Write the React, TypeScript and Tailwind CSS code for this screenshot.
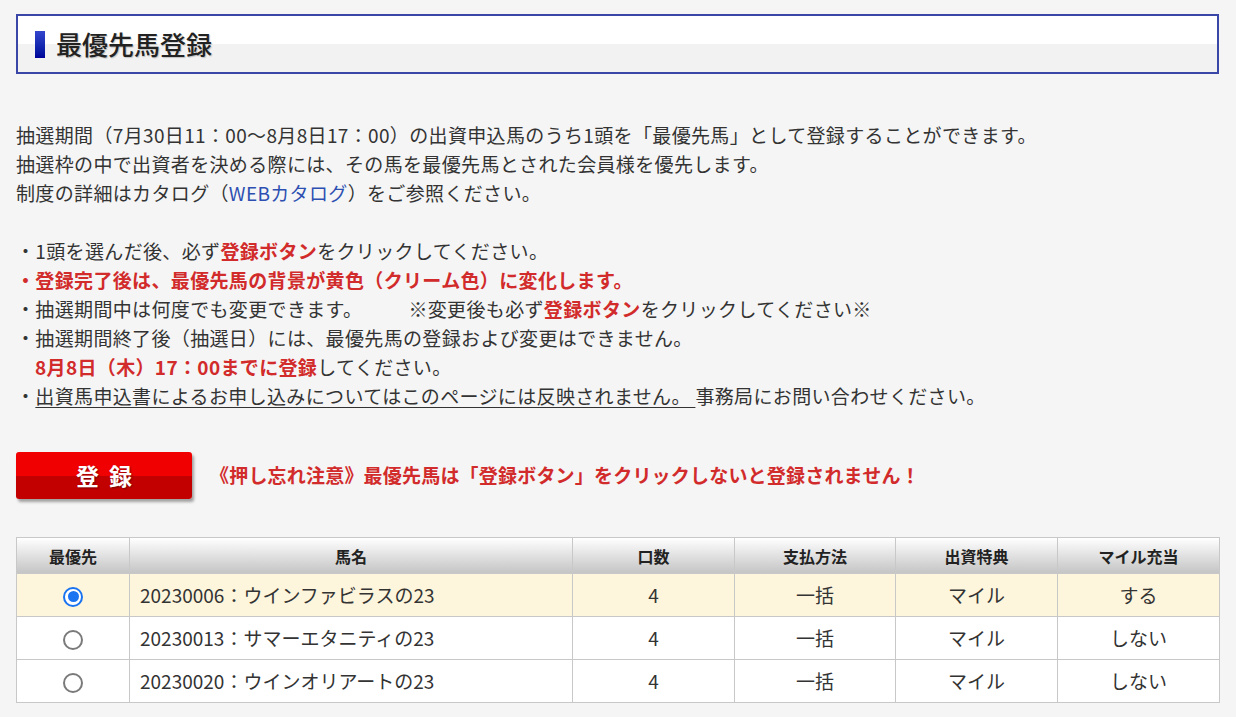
import { useState } from 'react';

// 最優先馬の登録画面
interface Horse {
  id: string;
  name: string;
  units: number;
  payment: string;
  benefit: string;
  mileUse: string;
}

const HORSES: Horse[] = [
  { id: '20230006', name: 'ウインファビラスの23', units: 4, payment: '一括', benefit: 'マイル', mileUse: 'する' },
  { id: '20230013', name: 'サマーエタニティの23', units: 4, payment: '一括', benefit: 'マイル', mileUse: 'しない' },
  { id: '20230020', name: 'ウインオリアートの23', units: 4, payment: '一括', benefit: 'マイル', mileUse: 'しない' },
];

function Radio({ checked, onClick }: { checked: boolean; onClick: () => void }) {
  return (
    <button
      type="button"
      onClick={onClick}
      className={
        checked
          ? 'w-5 h-5 rounded-full border-2 border-[#1a73f0] flex items-center justify-center bg-white'
          : 'w-5 h-5 rounded-full border-2 border-[#7a7a7a] bg-white'
      }
    >
      {checked && <span className="w-[11px] h-[11px] rounded-full bg-[#1a73f0]" />}
    </button>
  );
}

export default function App() {
  const [selected, setSelected] = useState('20230006');
  const [registered] = useState('20230006');

  const red = 'text-[#d22b2b] font-bold';

  return (
    <div className="min-h-[717px] bg-[#f5f5f5] pt-[14px] pl-4 pr-[17px] pb-4 text-[#333] font-['Noto_Sans_CJK_JP','Noto_Sans',sans-serif]">
      {/* 見出し */}
      <div className="h-[60px] border-2 border-[#3a47a6] bg-gradient-to-b from-white from-50% to-[#f2f2f2] to-50% flex items-center pl-[17px]">
        <span className="w-[10px] h-[27px] bg-gradient-to-b from-[#3345cc] to-[#000099]" />
        <h1 className="ml-[11px] text-[26px] leading-none text-[#222] font-medium [text-shadow:1px_1px_1px_rgba(0,0,0,0.2)]">
          最優先馬登録
        </h1>
      </div>

      <div className="mt-[46px] text-[19px] leading-[29px] tracking-[0.35px]">
        <p>抽選期間（7月30日11：00～8月8日17：00）の出資申込馬のうち1頭を「最優先馬」として登録することができます。</p>
        <p>抽選枠の中で出資者を決める際には、その馬を最優先馬とされた会員様を優先します。</p>
        <p>
          制度の詳細はカタログ（<a href="#" className="text-[#2d4fb2]">WEBカタログ</a>）をご参照ください。
        </p>
        <p className="h-[29px]" />
        <p>
          ・1頭を選んだ後、必ず<span className={red}>登録ボタン</span>をクリックしてください。
        </p>
        <p className={red}>・登録完了後は、最優先馬の背景が黄色（クリーム色）に変化します。</p>
        <p>
          ・抽選期間中は何度でも変更できます。<span className="inline-block w-[46px]" />※変更後も必ず
          <span className={red}>登録ボタン</span>をクリックしてください※
        </p>
        <p>・抽選期間終了後（抽選日）には、最優先馬の登録および変更はできません。</p>
        <p className="pl-[19px]">
          <span className={red}>8月8日（木）17：00までに登録</span>してください。
        </p>
        <p>
          ・<span className="underline underline-offset-[3px]">出資馬申込書によるお申し込みについてはこのページには反映されません。 </span>
          事務局にお問い合わせください。
        </p>
      </div>

      {/* 登録ボタン */}
      <div className="mt-[42px] flex items-center">
        <button
          type="button"
          className="w-[176px] h-[47px] rounded-[3px] bg-gradient-to-b from-[#f00000] from-50% to-[#c30000] to-50% shadow-[2px_3px_3px_rgba(0,0,0,0.35)] text-white text-[23px] font-bold tracking-[10px] pl-[10px] [text-shadow:1px_1px_2px_rgba(0,0,0,0.4)]"
        >
          登録
        </button>
        <p className="ml-[18px] text-[19px] font-bold text-[#d22b2b] tracking-[0.2px]">
          《押し忘れ注意》最優先馬は「登録ボタン」をクリックしないと登録されません！
        </p>
      </div>

      {/* 出資馬一覧 */}
      <table className="mt-[38px] w-full border-collapse table-fixed bg-white">
        <colgroup>
          <col className="w-[113px]" />
          <col className="w-[443px]" />
          <col className="w-[162px]" />
          <col className="w-[161px]" />
          <col className="w-[162px]" />
          <col className="w-[162px]" />
        </colgroup>
        <thead>
          <tr className="h-[36px] bg-gradient-to-b from-white to-[#c3c3c3] text-[16px] font-bold text-[#222]">
            {['最優先', '馬名', '口数', '支払方法', '出資特典', 'マイル充当'].map((h) => (
              <th key={h} className="border border-[#c8c8c8] font-bold">
                {h}
              </th>
            ))}
          </tr>
        </thead>
        <tbody className="text-[19px]">
          {HORSES.map((h) => (
            <tr key={h.id} className={h.id === registered ? 'h-[43px] bg-[#fdf5dc]' : 'h-[43px] bg-white'}>
              <td className="border border-[#c8c8c8]">
                <div className="flex justify-center pt-[3px]">
                  <Radio checked={selected === h.id} onClick={() => setSelected(h.id)} />
                </div>
              </td>
              <td className="border border-[#c8c8c8] pl-[10px]">
                {h.id}：{h.name}
              </td>
              <td className="border border-[#c8c8c8] text-center">{h.units}</td>
              <td className="border border-[#c8c8c8] text-center">{h.payment}</td>
              <td className="border border-[#c8c8c8] text-center">{h.benefit}</td>
              <td className="border border-[#c8c8c8] text-center">{h.mileUse}</td>
            </tr>
          ))}
        </tbody>
      </table>
    </div>
  );
}
